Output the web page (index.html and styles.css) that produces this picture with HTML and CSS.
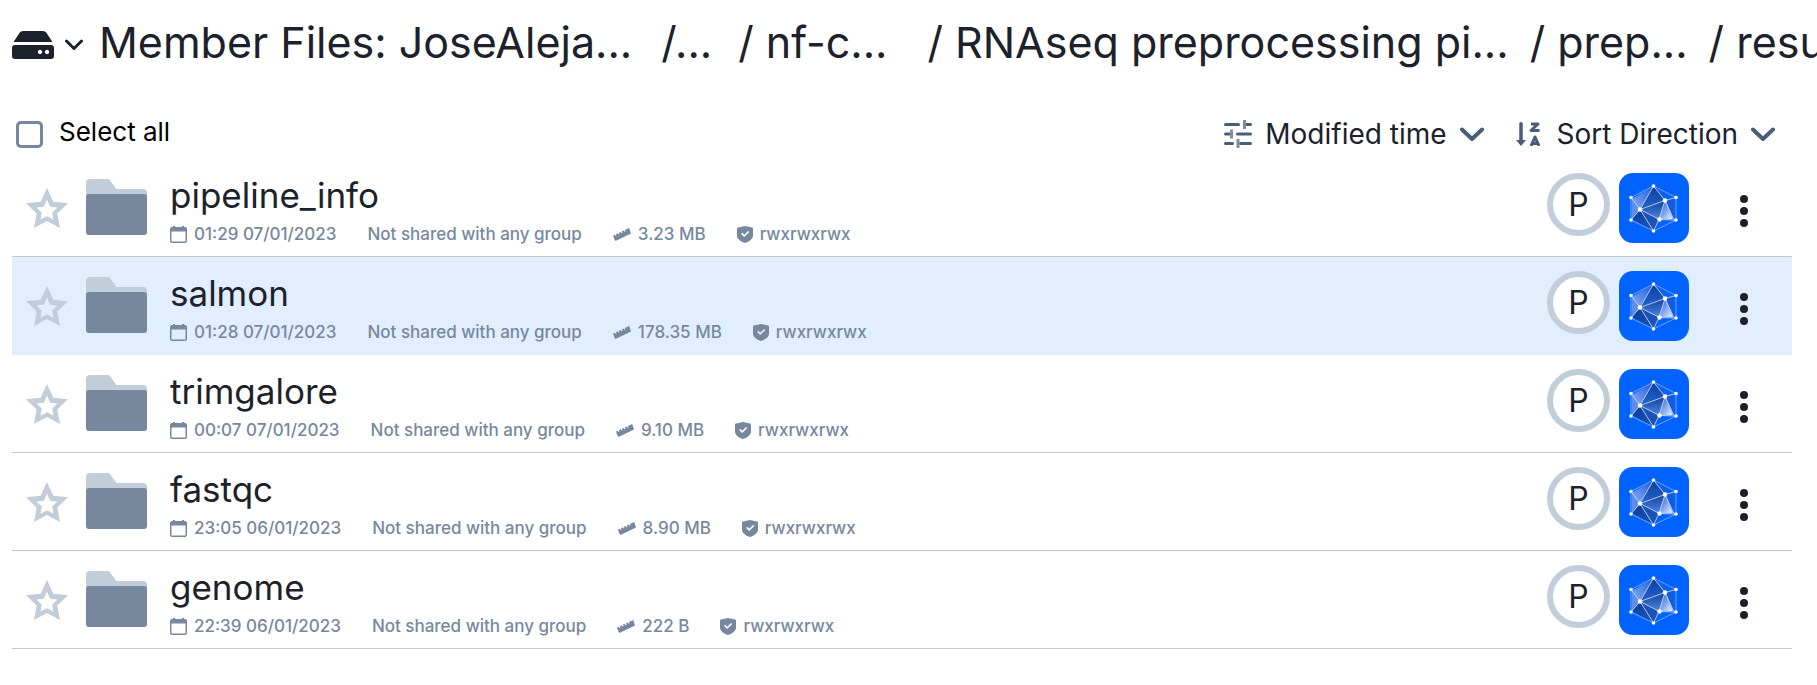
FILE: index.html
```html
<!DOCTYPE html>
<html lang="en">
<head>
<meta charset="utf-8">
<title>Member Files</title>
<link rel="stylesheet" href="styles.css">
</head>
<body>
<svg class="sprite" aria-hidden="true">
  <defs>
    <linearGradient id="g-left" x1="0" y1="1" x2="1" y2="0"><stop offset="0" stop-color="#8fb2f2"/><stop offset="1" stop-color="#1558d8"/></linearGradient>
    <linearGradient id="g-top" x1="0" y1="0" x2="0" y2="1"><stop offset="0" stop-color="#0b3f9e"/><stop offset="1" stop-color="#2563cc"/></linearGradient>
    <linearGradient id="g-mid" x1="0" y1="0" x2="0" y2="1"><stop offset="0" stop-color="#12409a"/><stop offset="1" stop-color="#4f86e6"/></linearGradient>
    <linearGradient id="g-low" x1="0" y1="0" x2="1" y2="1"><stop offset="0" stop-color="#0c3c96"/><stop offset="1" stop-color="#1a55bd"/></linearGradient>
    <linearGradient id="g-right" x1="0" y1="0" x2="1" y2="1"><stop offset="0" stop-color="#1554cc"/><stop offset=".5" stop-color="#7da3ea"/><stop offset="1" stop-color="#f2f6ff"/></linearGradient>
  </defs>
  <symbol id="star" viewBox="0 0 42 40"><path fill-rule="evenodd" d="M21 0l6.3 13.8L42 15.300l-10.700 10.200L34 40l-13-7L8 40l2.600-14.500L0 15.300l14.700-1.500zM21 11.500l-3.200 7.200-7.300.9 5.300 4.900-1.300 7.200 6.500-3.400 6.500 3.400-1.300-7.200 5.300-4.900-7.300-.9z"/></symbol>
  <symbol id="folder" viewBox="0 0 61 56"><path fill="#c1cdd9" d="M4 0h19l7.500 10H57a4 4 0 0 1 4 4v8H0V4a4 4 0 0 1 4-4z"/><path fill="#77889e" d="M3 15h55a3 3 0 0 1 3 3v35a3 3 0 0 1-3 3H3a3 3 0 0 1-3-3V18a3 3 0 0 1 3-3z"/></symbol>
  <symbol id="calendar" viewBox="0 0 17 17"><path fill-rule="evenodd" d="M3 0h2v1h7V0h2v1h1a2 2 0 0 1 2 2v12a2 2 0 0 1-2 2H2a2 2 0 0 1-2-2V3a2 2 0 0 1 2-2h1zM1.500 5.500V15a.5.5 0 0 0 .5.5h13a.5.5 0 0 0 .5-.5V5.500z"/></symbol>
  <symbol id="ruler" viewBox="0 0 18 13"><path d="M0 7.500l1.800-.8.8 1.300 1-.5-.8-1.300 2-.9.8 1.300 1-.5-.8-1.300 2-.9.8 1.300 1-.5-.8-1.300 2-.9.8 1.300 1-.5-.8-1.300L16.200 0 18 5.500 3 12.800Q2 13 1.600 12z"/></symbol>
  <symbol id="shield" viewBox="0 0 16 17"><path fill-rule="evenodd" d="M8 0l7 1.600a1 1 0 0 1 1 1V9.500c0 4-4.500 6.300-8 7.500-3.500-1.200-8-3.500-8-7.500V2.600a1 1 0 0 1 1-1zM4.100 8l3.100 3.100L12.300 6 11.100 4.900 7.200 8.700 5.300 6.800z"/></symbol>
  <symbol id="chevron" viewBox="0 0 24 15"><path fill="none" stroke="currentColor" stroke-width="4" stroke-linecap="round" stroke-linejoin="round" d="M2 2.500l10 9.500 10-9.500"/></symbol>
  <symbol id="app" viewBox="0 0 70 70">
    <path fill="url(#g-left)" d="M13 26L34.500 13 21 36.500z"/>
    <path fill="#5f8ee8" d="M13 26l8 10.500L13 46z"/>
    <path fill="url(#g-top)" d="M34.500 13L46 27.500 21 36.500z"/>
    <path fill="#1a5fe0" d="M34.500 13L54 29l-8-1.500z"/>
    <path fill="url(#g-mid)" d="M46 27.500l-6 19-19-10z"/>
    <path fill="url(#g-low)" d="M21 36.500l13.500 21.500L13 46z"/>
    <path fill="#1c52b5" d="M21 36.500l19 10L34.500 58z"/>
    <path fill="url(#g-right)" d="M46 27.500L54 46l-14 .5z"/>
    <path fill="#1759d6" d="M46 27.500l8-2V46z"/>
    <g fill="none" stroke="#d5e3ff" stroke-width=".8"><path stroke="#8db5ff" d="M34.500 13L57 24.500V47L34.500 58 12 47V24.500z"/><path d="M12 24.500l9 12L12 47M34.500 13L21 36.500 34.500 58 40 46.500l6-19zM57 24.500l-11 3-25 9 19.500 10L57 47"/><path stroke="#fff" d="M46 27.500L54.500 46"/></g>
    <g fill="#fff"><circle cx="34.500" cy="13" r="1.800"/><circle cx="57" cy="24.500" r="1.800"/><circle cx="57" cy="47" r="1.800"/><circle cx="34.500" cy="58" r="1.800"/><circle cx="12" cy="47" r="1.800"/><circle cx="12" cy="24.500" r="1.800"/><circle cx="21" cy="36.500" r="2.200"/><circle cx="46" cy="27.500" r="2.200"/><circle cx="40.500" cy="46.500" r="2.200"/></g>
  </symbol>
  <symbol id="dots" viewBox="0 0 8 32"><circle cx="4" cy="4" r="4"/><circle cx="4" cy="16" r="4"/><circle cx="4" cy="28" r="4"/></symbol>
</svg>

<nav class="crumbs" aria-label="Breadcrumb">
  <button class="drive" type="button" aria-label="Switch drive">
    <svg class="drive-icon" viewBox="0 0 42 28"><path d="M11 0h20a4 4 0 0 1 3.200 1.500L40.500 11h-39L7.800 1.500A4 4 0 0 1 11 0z"/><path fill-rule="evenodd" d="M3 14h36a3 3 0 0 1 3 3v8a3 3 0 0 1-3 3H3a3 3 0 0 1-3-3v-8a3 3 0 0 1 3-3zm25 4.800a2.200 2.200 0 1 0 .01 0zm7 0a2.200 2.200 0 1 0 .01 0z"/></svg>
    <svg class="drive-chevron" viewBox="0 0 18 12"><path fill="none" stroke="currentColor" stroke-width="3" stroke-linecap="round" stroke-linejoin="round" d="M1.500 2L9 9.500 16.500 2"/></svg>
  </button>
  <a class="crumb crumb-root" href="#">Member Files: JoseAleja...</a>
  <a class="crumb crumb-more" href="#">/...</a>
  <a class="crumb crumb-org" href="#">/ nf-c...</a>
  <a class="crumb crumb-run" href="#">/ RNAseq preprocessing pi...</a>
  <a class="crumb crumb-run" href="#">/ prep...</a>
  <a class="crumb" href="#">/ results</a>
</nav>

<div class="toolbar">
  <label class="select-all"><input class="tick" type="checkbox"><span>Select all</span></label>
  <div class="sorting">
    <button class="sort" type="button">
      <svg class="sort-icon" viewBox="0 0 28 28"><g fill="#4a5d78"><rect y="3" width="16" height="3" rx="1.500"/><rect x="21" y="3" width="7" height="3" rx="1.500"/><rect y="12.500" width="7" height="3" rx="1.500"/><rect x="12" y="12.500" width="16" height="3" rx="1.500"/><rect y="22" width="10" height="3" rx="1.500"/><rect x="15" y="22" width="13" height="3" rx="1.500"/></g><g fill="#7c8ea6"><path d="M19 0h3v9h-3zM6 9.500h3v9H6zM12.500 19h3v9h-3z"/></g></svg>
      <span>Modified time</span>
      <svg class="sort-chevron"><use href="#chevron"/></svg>
    </button>
    <button class="sort" type="button">
      <svg class="order-icon" viewBox="0 0 24 24"><path fill="none" stroke="#4a5d78" stroke-width="3.500" stroke-linecap="round" d="M5 1.800V20"/><path fill="#4a5d78" d="M0 18h10l-5 6z"/><path fill="none" stroke="#4a5d78" stroke-width="3" stroke-linejoin="round" d="M15 2h7l-7 6.500h8.500"/><path fill="none" stroke="#4a5d78" stroke-width="3" stroke-linejoin="round" d="M15 24l4-9 4 9M16.500 21.500h5"/></svg>
      <span>Sort Direction</span>
      <svg class="sort-chevron"><use href="#chevron"/></svg>
    </button>
  </div>
</div>

<ul class="files">
  <li class="file">
    <button class="star" type="button" aria-label="Favourite"><svg><use href="#star"/></svg></button>
    <svg class="folder"><use href="#folder"/></svg>
    <div class="info">
      <a class="name" href="#">pipeline_info</a>
      <div class="meta"><span class="fact"><svg class="i-cal"><use href="#calendar"/></svg>01:29 07/01/2023</span><span class="fact">Not shared with any group</span><span class="fact"><svg class="i-ruler"><use href="#ruler"/></svg>3.23 MB</span><span class="fact"><svg class="i-shield"><use href="#shield"/></svg>rwxrwxrwx</span></div>
    </div>
    <span class="badge">P</span>
    <svg class="app"><use href="#app"/></svg>
    <button class="menu" type="button" aria-label="More"><svg><use href="#dots"/></svg></button>
  </li>
  <li class="file is-active">
    <button class="star" type="button" aria-label="Favourite"><svg><use href="#star"/></svg></button>
    <svg class="folder"><use href="#folder"/></svg>
    <div class="info">
      <a class="name" href="#">salmon</a>
      <div class="meta"><span class="fact"><svg class="i-cal"><use href="#calendar"/></svg>01:28 07/01/2023</span><span class="fact">Not shared with any group</span><span class="fact"><svg class="i-ruler"><use href="#ruler"/></svg>178.35 MB</span><span class="fact"><svg class="i-shield"><use href="#shield"/></svg>rwxrwxrwx</span></div>
    </div>
    <span class="badge">P</span>
    <svg class="app"><use href="#app"/></svg>
    <button class="menu" type="button" aria-label="More"><svg><use href="#dots"/></svg></button>
  </li>
  <li class="file">
    <button class="star" type="button" aria-label="Favourite"><svg><use href="#star"/></svg></button>
    <svg class="folder"><use href="#folder"/></svg>
    <div class="info">
      <a class="name" href="#">trimgalore</a>
      <div class="meta"><span class="fact"><svg class="i-cal"><use href="#calendar"/></svg>00:07 07/01/2023</span><span class="fact">Not shared with any group</span><span class="fact"><svg class="i-ruler"><use href="#ruler"/></svg>9.10 MB</span><span class="fact"><svg class="i-shield"><use href="#shield"/></svg>rwxrwxrwx</span></div>
    </div>
    <span class="badge">P</span>
    <svg class="app"><use href="#app"/></svg>
    <button class="menu" type="button" aria-label="More"><svg><use href="#dots"/></svg></button>
  </li>
  <li class="file">
    <button class="star" type="button" aria-label="Favourite"><svg><use href="#star"/></svg></button>
    <svg class="folder"><use href="#folder"/></svg>
    <div class="info">
      <a class="name" href="#">fastqc</a>
      <div class="meta"><span class="fact"><svg class="i-cal"><use href="#calendar"/></svg>23:05 06/01/2023</span><span class="fact">Not shared with any group</span><span class="fact"><svg class="i-ruler"><use href="#ruler"/></svg>8.90 MB</span><span class="fact"><svg class="i-shield"><use href="#shield"/></svg>rwxrwxrwx</span></div>
    </div>
    <span class="badge">P</span>
    <svg class="app"><use href="#app"/></svg>
    <button class="menu" type="button" aria-label="More"><svg><use href="#dots"/></svg></button>
  </li>
  <li class="file">
    <button class="star" type="button" aria-label="Favourite"><svg><use href="#star"/></svg></button>
    <svg class="folder"><use href="#folder"/></svg>
    <div class="info">
      <a class="name" href="#">genome</a>
      <div class="meta"><span class="fact"><svg class="i-cal"><use href="#calendar"/></svg>22:39 06/01/2023</span><span class="fact">Not shared with any group</span><span class="fact"><svg class="i-ruler"><use href="#ruler"/></svg>222 B</span><span class="fact"><svg class="i-shield"><use href="#shield"/></svg>rwxrwxrwx</span></div>
    </div>
    <span class="badge">P</span>
    <svg class="app"><use href="#app"/></svg>
    <button class="menu" type="button" aria-label="More"><svg><use href="#dots"/></svg></button>
  </li>
</ul>
</body>
</html>
```
FILE: styles.css
```css
* { box-sizing: border-box; }
body { margin: 0; background: #fff; color: #1c212b; font-family: Inter, "Liberation Sans", sans-serif; overflow-x: hidden; }
button { border: 0; padding: 0; background: none; color: inherit; font: inherit; cursor: pointer; }
a { color: inherit; text-decoration: none; }
svg { display: block; flex: none; fill: currentColor; }
.sprite { position: absolute; width: 0; height: 0; }

.crumbs { display: flex; align-items: center; gap: 16px; padding: 14px 0 0 12px; line-height: 56px; font-size: 43px; white-space: nowrap; overflow: hidden; }
.crumb { flex: none; }
.crumb-root { margin-right: 13px; }
.crumb-more { margin-right: 10px; }
.crumb-org { margin-right: 24px; }
.crumb-run { margin-right: 5px; }
.drive { display: flex; align-items: center; gap: 11px; flex: none; padding-top: 6px; }
.drive-icon { width: 42px; height: 28px; }
.drive-chevron { width: 18px; height: 12px; }

.toolbar { display: flex; justify-content: space-between; align-items: center; padding: 42px 42px 3px 16px; line-height: 40px; }
.select-all { display: flex; align-items: center; gap: 16px; font-size: 26px; color: #000; padding-bottom: 4px; }
.tick { appearance: none; width: 27px; height: 27px; margin: 4px 0 0; border: 3px solid #77889e; border-radius: 5px; background: #fff; }
.tick:checked { background: #77889e; }
.sorting { display: flex; gap: 32px; font-size: 28px; }
.sort { display: flex; align-items: center; gap: 13px; }
.sort-icon { width: 28px; height: 28px; }
.order-icon { width: 24px; height: 24px; margin-right: 4px; }
.sort-chevron { width: 24px; height: 15px; color: #4a5d78; }

.files { list-style: none; margin: 0 25px 0 12px; padding: 0; }
.file { display: flex; align-items: flex-start; padding: 14px 44px 9px 14px; border-bottom: 1px solid #c8c9cb; }
.is-active { background: #e1eeff; border-color: #e1eeff; }
.star { margin: 15px 18px 0 0; color: #c1cdd9; }
.star svg { width: 42px; height: 40px; }
.folder { width: 61px; height: 56px; margin: 6px 23px 0 0; }
.info { flex: 1; min-width: 0; }
.name { display: block; font-size: 35px; line-height: 44px; }
.meta { display: flex; align-items: center; gap: 31px; color: #77889e; font-size: 17px; font-weight: 500; line-height: 26px; white-space: nowrap; padding-top: 4px; }
.fact { display: flex; align-items: center; gap: 7px; }
.i-cal { width: 17px; height: 17px; }
.i-ruler { width: 18px; height: 13px; }
.i-shield { width: 16px; height: 17px; }
.badge { width: 63px; height: 63px; margin-right: 9px; border: 6px solid #c1cdd9; border-radius: 50%; background: #fff; font-size: 32px; line-height: 51px; text-align: center; }
.app { width: 70px; height: 70px; border-radius: 14px; background: #0062ff; }
.menu { padding: 22px 0 0 51px; }
.menu svg { width: 8px; height: 32px; }
```
